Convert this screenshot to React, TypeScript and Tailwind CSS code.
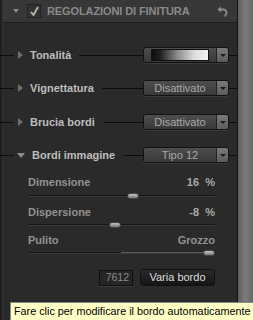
import React from 'react';

const sans = { fontFamily: '"Liberation Sans", Arial, sans-serif' };

function Caret({ open }: { open?: boolean }) {
  return open ? (
    <span className="ml-[3px] w-0 h-0 border-l-[4px] border-r-[4px] border-t-[5px] border-l-transparent border-r-transparent border-t-[#8a8a8a]" />
  ) : (
    <span className="ml-[4px] w-0 h-0 border-t-[4px] border-b-[4px] border-l-[5px] border-t-transparent border-b-transparent border-l-[#6f6f6f]" />
  );
}

function Dropdown({ children }: { children: React.ReactNode }) {
  return (
    <div className="w-[86px] h-[16px] flex rounded-[3px] border border-[#121212] overflow-hidden shadow-[0_1px_0_#3a3a3a]">
      <div className="flex-1 flex items-center justify-center bg-gradient-to-b from-[#4e4e4e] to-[#383838] text-[11px] text-[#a9a9a9]">
        {children}
      </div>
      <div className="w-[12px] flex items-center justify-center bg-gradient-to-b from-[#7a7a7a] to-[#5c5c5c] border-l border-[#222]">
        <span className="w-0 h-0 border-l-[3px] border-r-[3px] border-t-[3px] border-l-transparent border-r-transparent border-t-[#1a1a1a]" />
      </div>
    </div>
  );
}

function Row({ label, open, children, className }: { label: string; open?: boolean; children: React.ReactNode; className: string }) {
  return (
    <div className={`flex items-center h-[16px] ${className}`}>
      <div className="w-[15px] -ml-[4px] h-px bg-[#0c0c0c]" />
      <Caret open={open} />
      <span className="ml-[7px] text-[11px] font-bold text-[#bdbdbd]">{label}</span>
      <div className="flex-1 ml-[8px] h-px bg-[#0c0c0c]" />
      <Dropdown>{children}</Dropdown>
      <div className="w-[8px] h-px bg-[#0c0c0c]" />
    </div>
  );
}

function Slider({ pos, fill }: { pos: number; fill?: [number, number] }) {
  return (
    <div className="relative h-[8px] flex items-center">
      <div className="w-full h-[2px] bg-[#151515] border-b border-[#3a3a3a]" />
      {fill && (
        <div
          className="absolute top-[3px] h-px bg-[#5a5a5a]"
          style={{ left: fill[0], width: fill[1] - fill[0] }}
        />
      )}
      <div
        className="absolute top-[1px] w-[12px] h-[6px] rounded-full bg-gradient-to-b from-[#c4c4c4] to-[#7a7a7a] border border-[#444]"
        style={{ left: pos }}
      />
    </div>
  );
}

export default function App() {
  return (
    <div className="w-[253px] h-[320px] relative overflow-hidden flex bg-[#2a2a2a]" style={sans}>
      <div className="w-[3px] bg-[#1f1f1f] border-r border-[#353535]" />
      <div className="w-[234px] flex flex-col">
        <div className="h-[23px] flex items-center bg-[#373737] border-b border-[#1d1d1d]">
          <span className="ml-[10px] w-0 h-0 border-l-[3px] border-r-[3px] border-t-[4px] border-l-transparent border-r-transparent border-t-[#8c8c8c]" />
          <div className="ml-[8px] w-[14px] h-[14px] border border-[#222] bg-[#333] flex items-center justify-center">
            <svg width="11" height="11" viewBox="0 0 11 11">
              <path d="M2 6 L4.5 9 L9 1" fill="none" stroke="#b9b9b9" strokeWidth="1.8" />
            </svg>
          </div>
          <span className="ml-[6px] text-[11px] font-bold text-[#8a8a8a] tracking-[-0.1px]">REGOLAZIONI DI FINITURA</span>
          <svg className="ml-auto mr-[9px]" width="11" height="11" viewBox="0 0 11 11">
            <path d="M0.5 3.5 L4 0.5 L4 6.5 Z" fill="#8a8a8a" />
            <path d="M4 3.5 H6 A3.2 3.2 0 0 1 8.5 9 L8 10.5" fill="none" stroke="#8a8a8a" strokeWidth="1.8" />
          </svg>
        </div>

        <Row label="Tonalità" className="mt-[24px]">
          <div className="w-[58px] h-[12px] border border-[#111] bg-[linear-gradient(to_right,#0e0e0e_0%,#1f1f1f_15%,#8a8a8a_45%,#dcdcdc_75%,#f2f2f2_100%)]" />
        </Row>
        <Row label="Vignettatura" className="mt-[17px]">Disattivato</Row>
        <Row label="Brucia bordi" className="mt-[18px]">Disattivato</Row>
        <Row label="Bordi immagine" open className="mt-[17px]">Tipo 12</Row>

        <div className="ml-[25px] mr-[22px] flex flex-col text-[11px] font-bold">
          <div className="mt-[12px] flex justify-between text-[#929292] leading-[14px]">
            <span>Dimensione</span>
            <span className="text-[#a8a8a8]">16&nbsp;&nbsp;%</span>
          </div>
          <div className="mt-[3px]">
            <Slider pos={99} />
          </div>
          <div className="mt-[5px] flex justify-between text-[#929292] leading-[14px]">
            <span>Dispersione</span>
            <span className="text-[#a8a8a8]">-8&nbsp;&nbsp;%</span>
          </div>
          <div className="mt-[2px]">
            <Slider pos={81} />
          </div>
          <div className="mt-[4px] flex justify-between text-[#929292] leading-[14px]">
            <span>Pulito</span>
            <span>Grozzo</span>
          </div>
          <div className="mt-[2px]">
            <Slider pos={175} fill={[93, 176]} />
          </div>
          <div className="mt-[12px] flex justify-end items-center font-normal">
            <div className="w-[34px] h-[16px] border border-[#0f0f0f] bg-[#262626] shadow-[0_1px_0_#3c3c3c] text-right pr-[3px] text-[10.5px] text-[#8c8c8c] leading-[13px]">
              7612
            </div>
            <div className="ml-[7px] w-[75px] h-[17px] rounded-[3px] border border-[#111] bg-gradient-to-b from-[#2a2a2a] to-[#151515] flex items-center justify-center text-[11px] text-[#dedede]">
              Varia bordo
            </div>
          </div>
        </div>
      </div>
      <div className="w-px bg-[#141414]" />
      <div className="w-[15px] bg-gradient-to-r from-[#5e5e5e] via-[#7c7c7c] to-[#666]" />
      <div className="absolute left-[10px] right-0 bottom-0 h-[18px] bg-[#ffffc6] border-t border-l border-[#8a8a8a] pl-[3px] text-[10.8px] text-black leading-[17px] whitespace-nowrap overflow-hidden">
        Fare clic per modificare il bordo automaticamente
      </div>
    </div>
  );
}
